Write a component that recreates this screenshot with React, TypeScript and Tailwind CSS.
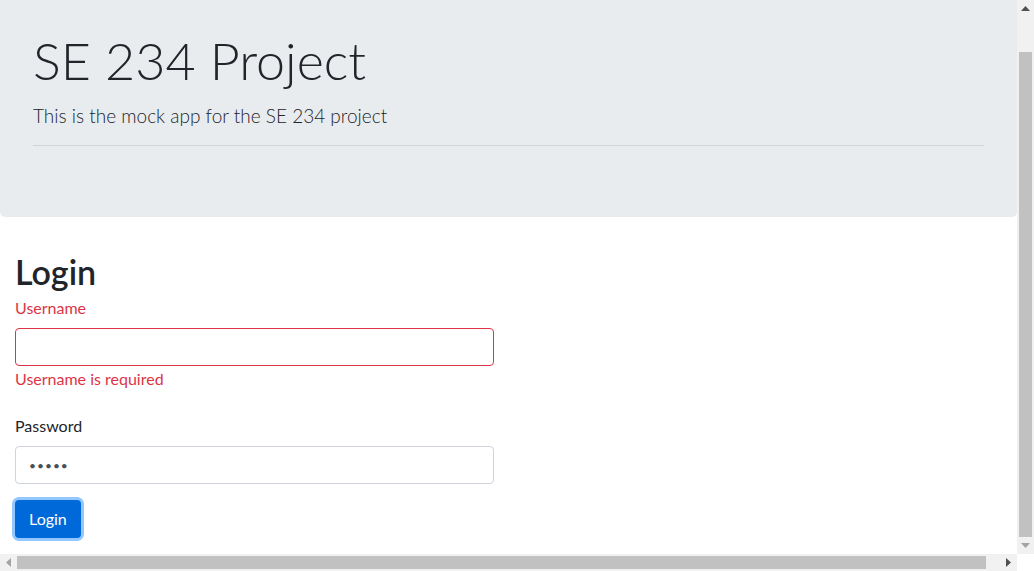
import React from "react";

function VScrollbar() {
  return (
    <div className="w-[17px] bg-[#f1f1f1] flex flex-col items-center">
      <div className="h-[17px] w-full flex items-center justify-center">
        <svg width="9" height="5" viewBox="0 0 9 5"><path d="M0 5 L4.5 0 L9 5 Z" fill="#505050" /></svg>
      </div>
      <div className="h-[35px]" />
      <div className="w-[13px] flex-1 bg-[#c1c1c1]" />
      <div className="h-[17px] w-full flex items-center justify-center">
        <svg width="9" height="5" viewBox="0 0 9 5"><path d="M0 0 L9 0 L4.5 5 Z" fill="#a3a3a3" /></svg>
      </div>
    </div>
  );
}

function HScrollbar() {
  return (
    <div className="h-[17px] flex">
      <div className="flex-1 bg-[#f1f1f1] flex items-center">
        <div className="w-[17px] h-full flex items-center justify-center">
          <svg width="5" height="9" viewBox="0 0 5 9"><path d="M5 0 L0 4.5 L5 9 Z" fill="#a3a3a3" /></svg>
        </div>
        <div className="w-[969px] h-[13px] bg-[#c1c1c1]" />
        <div className="flex-1" />
        <div className="w-[17px] h-full flex items-center justify-center">
          <svg width="5" height="9" viewBox="0 0 5 9"><path d="M0 0 L5 4.5 L0 9 Z" fill="#505050" /></svg>
        </div>
      </div>
      <div className="w-[17px] bg-white" />
    </div>
  );
}

export default function App() {
  return (
    <div className="h-[571px] w-[1034px] flex flex-col overflow-hidden bg-white text-[#212529] font-['Lato','Open_Sans',sans-serif]">
      <div className="flex flex-1 min-h-0">
        <main className="flex-1 min-w-0 overflow-hidden">
          <div className="h-[217px] bg-[#e9ecef] rounded-b-[5px] px-[33px] pt-[28px]">
            <h1 className="text-[52px] leading-[64px] font-light">SE 234 Project</h1>
            <p className="mt-[10px] text-[19px] leading-[28px] font-light">
              This is the mock app for the SE 234 project
            </p>
            <hr className="mt-[15px] border-t border-[#d2d4d7]" />
          </div>
          <div className="px-[15px] pt-[36px]">
            <h2 className="text-[34px] leading-[38px] font-semibold">Login</h2>
            <div className="mt-[5px]">
              <label className="block text-[16px] leading-[24px] text-[#dc3545]">Username</label>
              <input
                type="text"
                className="mt-[8px] block w-[479px] h-[38px] rounded-[4px] border border-[#dc3545] px-[12px] text-[16px] outline-none"
              />
              <div className="mt-[1px] text-[16px] leading-[24px] text-[#dc3545]">Username is required</div>
            </div>
            <div className="mt-[23px]">
              <label className="block text-[16px] leading-[24px]">Password</label>
              <input
                type="password"
                defaultValue="12345"
                readOnly
                className="mt-[8px] block w-[479px] h-[38px] rounded-[4px] border border-[#ced4da] px-[13px] text-[12px] tracking-[1px] text-[#495057] outline-none"
              />
            </div>
            <button className="mt-[16px] h-[38px] px-[14px] rounded-[4px] bg-[#0069d9] text-white text-[16px] leading-[24px] shadow-[0_0_0_3px_rgba(38,143,255,0.5)]">
              Login
            </button>
          </div>
        </main>
        <VScrollbar />
      </div>
      <HScrollbar />
    </div>
  );
}
